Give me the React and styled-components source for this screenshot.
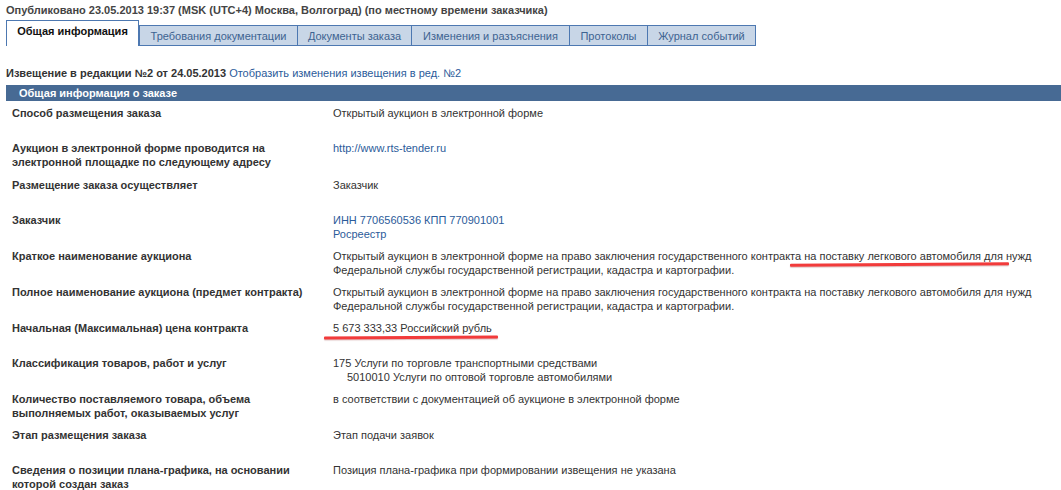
import React from "react";
import styled, { createGlobalStyle } from "styled-components";

const Global = createGlobalStyle`
  html, body { margin: 0; padding: 0; background: #fff; }
  body { font-family: "Liberation Sans", Arial, sans-serif; font-size: 11px; color: #333; }
`;

const Page = styled.div`
  padding: 4px 0 0 6px;
  width: 1055px;
  overflow: hidden;
`;

const Published = styled.div`
  font-weight: bold;
  color: #444;
  line-height: 13px;
  white-space: nowrap;
`;

const Tabs = styled.div`
  display: flex;
  align-items: flex-end;
  margin-top: 3px;
  height: 26px;
`;

const Tab = styled.div`
  box-sizing: border-box;
  height: ${(p) => (p.$active ? "26px" : "21px")};
  display: flex;
  align-items: center;
  justify-content: center;
  border: 1px solid #4d78b1;
  border-bottom: ${(p) => (p.$active ? "none" : "1px solid #4d78b1")};
  border-left-width: ${(p) => (p.$first || p.$active ? "1px" : "0")};
  background: ${(p) => (p.$active ? "#fff" : "#c8d6e7")};
  color: ${(p) => (p.$active ? "#111" : "#3d6391")};
  font-weight: ${(p) => (p.$active ? "bold" : "normal")};
  padding-bottom: ${(p) => (p.$active ? "5px" : "0")};
  white-space: nowrap;
  width: ${(p) => p.$w}px;
`;

const Notice = styled.div`
  margin-top: 21px;
  line-height: 13px;
  font-weight: bold;
  color: #333;
  white-space: nowrap;
`;

const Link = styled.span`
  color: #2b5b9a;
  font-weight: normal;
`;

const SectionHeader = styled.div`
  margin-top: 5px;
  height: 16px;
  background: #476a94;
  color: #fff;
  font-weight: bold;
  line-height: 16px;
  padding-left: 13px;
  white-space: nowrap;
`;

const Rows = styled.div`
  display: grid;
  grid-template-columns: 321px 1fr;
  padding-left: 6px;
`;

const Label = styled.div`
  box-sizing: border-box;
  min-height: ${(p) => p.$h || 35}px;
  padding: 6px 0 3px;
  line-height: 13.5px;
  font-weight: bold;
  color: #333;
`;

const Value = styled.div`
  box-sizing: border-box;
  min-height: ${(p) => p.$h || 35}px;
  padding: 6px 0 3px;
  line-height: 13.5px;
  color: #333;
  white-space: nowrap;
`;

const ValueLink = styled.div`
  color: #2b5b9a;
`;

const Indented = styled.div`
  padding-left: 14px;
`;

const Marked = styled.span`
  position: relative;
  &::after {
    content: "";
    position: absolute;
    left: ${(p) => p.$l}px;
    right: ${(p) => p.$r}px;
    bottom: ${(p) => p.$b}px;
    height: 3px;
    border-radius: 1px;
    background: #f23b3b;
    box-shadow: 0 1px 1px rgba(120, 0, 0, 0.25);
    transform: rotate(${(p) => p.$rot || 0}deg);
  }
`;

const tabs = [
  { t: "Общая информация", w: 133, active: true },
  { t: "Требования документации", w: 159 },
  { t: "Документы заказа", w: 114 },
  { t: "Изменения и разъяснения", w: 158 },
  { t: "Протоколы", w: 78 },
  { t: "Журнал событий", w: 108 },
];

export default function App() {
  return (
    <>
      <Global />
      <Page>
        <Published>
          Опубликовано 23.05.2013 19:37 (MSK (UTC+4) Москва, Волгоград) (по местному времени заказчика)
        </Published>
        <Tabs>
          {tabs.map((x, i) => (
            <Tab key={x.t} $active={x.active} $first={i === 1} $w={x.w}>
              {x.t}
            </Tab>
          ))}
        </Tabs>
        <Notice>
          Извещение в редакции №2 от 24.05.2013 <Link>Отобразить изменения извещения в ред. №2</Link>
        </Notice>
        <SectionHeader>Общая информация о заказе</SectionHeader>
        <Rows>
          <Label>Способ размещения заказа</Label>
          <Value>Открытый аукцион в электронной форме</Value>

          <Label $h={37}>
            Аукцион в электронной форме проводится на
            <br />
            электронной площадке по следующему адресу
          </Label>
          <Value $h={37}>
            <ValueLink>http://www.rts-tender.ru</ValueLink>
          </Value>

          <Label>Размещение заказа осуществляет</Label>
          <Value>Заказчик</Value>

          <Label $h={36}>Заказчик</Label>
          <Value $h={36}>
            <ValueLink>ИНН 7706560536 КПП 770901001</ValueLink>
            <ValueLink>Росреестр</ValueLink>
          </Value>

          <Label $h={36}>Краткое наименование аукциона</Label>
          <Value $h={36}>
            Открытый аукцион в электронной форме на право заключения государственного контракт
            <Marked $l={-5} $r={-6} $b={-4} $rot={-0.4}>а на поставку легкового автомобиля для</Marked> нужд
            <br />
            Федеральной службы государственной регистрации, кадастра и картографии.
          </Value>

          <Label $h={36}>Полное наименование аукциона (предмет контракта)</Label>
          <Value $h={36}>
            Открытый аукцион в электронной форме на право заключения государственного контракта на поставку легкового автомобиля для нужд
            <br />
            Федеральной службы государственной регистрации, кадастра и картографии.
          </Value>

          <Label>Начальная (Максимальная) цена контракта</Label>
          <Value>
            <Marked $l={-9} $r={-6} $b={-5} $rot={-0.3}>5 673 333,33 Российский рубль</Marked>
          </Value>

          <Label $h={35}>Классификация товаров, работ и услуг</Label>
          <Value $h={35}>
            175 Услуги по торговле транспортными средствами
            <Indented>5010010 Услуги по оптовой торговле автомобилями</Indented>
          </Value>

          <Label $h={36}>
            Количество поставляемого товара, объема
            <br />
            выполняемых работ, оказываемых услуг
          </Label>
          <Value $h={36}>в соответствии с документацией об аукционе в электронной форме</Value>

          <Label>Этап размещения заказа</Label>
          <Value>Этап подачи заявок</Value>

          <Label>
            Сведения о позиции плана-графика, на основании
            <br />
            которой создан заказ
          </Label>
          <Value>Позиция плана-графика при формировании извещения не указана</Value>
        </Rows>
      </Page>
    </>
  );
}
